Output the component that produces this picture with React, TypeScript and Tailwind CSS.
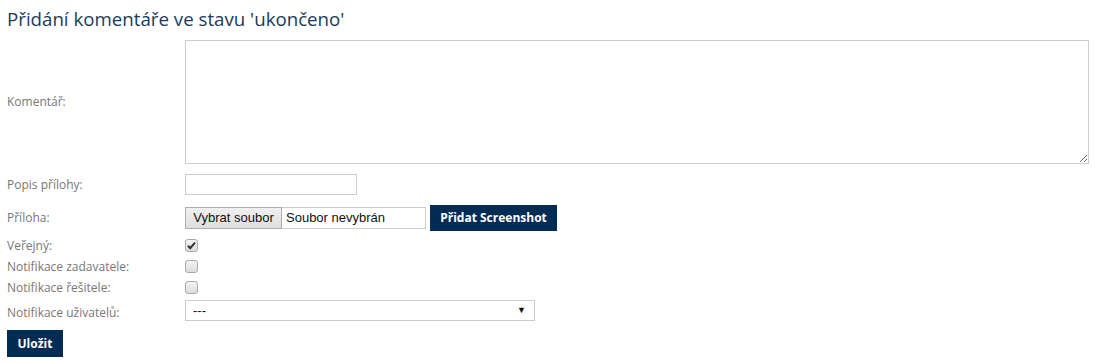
import React from "react";

const labelCls = "w-[178px] shrink-0 text-[12px] text-[#777777]";

function Check({ checked }: { checked?: boolean }) {
  return (
    <span className="relative inline-block h-[13px] w-[13px] rounded-[3px] border border-[#a9a9a9] bg-gradient-to-b from-[#f4f4f4] to-[#dcdcdc]">
      {checked && (
        <svg viewBox="0 0 13 13" className="absolute left-[-1px] top-[-1px] h-[13px] w-[13px]">
          <path d="M3 6.8 L5.2 9.2 L10 3.6" fill="none" stroke="#333" strokeWidth="2" />
        </svg>
      )}
    </span>
  );
}

export default function App() {
  return (
    <div className="h-[363px] w-[1095px] bg-white pl-[7px]" style={{ fontFamily: '"Open Sans", "Noto Sans", sans-serif' }}>
      <div className="flex h-[40px] items-start pt-[6px]">
        <h1 className="text-[18.7px] font-normal leading-[26px] text-[#1c3a5c]">Přidání komentáře ve stavu 'ukončeno'</h1>
      </div>
      <div className="flex h-[124px] items-center">
        <div className={labelCls}>Komentář:</div>
        <textarea className="h-[124px] w-[904px] resize border border-[#cccccc] outline-none" />
      </div>
      <div className="flex h-[41px] items-center">
        <div className={labelCls}>Popis přílohy:</div>
        <div className="h-[21px] w-[172px] border border-[#cccccc]" />
      </div>
      <div className="flex h-[26px] items-center">
        <div className={labelCls}>Příloha:</div>
        <div className="flex h-[22px] w-[241px] items-center border border-[#cccccc]" style={{ fontFamily: '"Liberation Sans", Arial, sans-serif' }}>
          <div className="ml-[-1px] flex h-[22px] w-[97px] items-center justify-center border border-[#adadad] bg-gradient-to-b from-[#f0f0f0] to-[#dedede] text-[13px] text-[#111]">
            Vybrat soubor
          </div>
          <span className="pl-[4px] text-[13px] text-[#111]">Soubor nevybrán</span>
        </div>
        <div className="ml-[4px] flex h-[26px] w-[127px] items-center justify-center bg-[#032c55] text-[12px] font-bold text-white">
          Přidat Screenshot
        </div>
      </div>
      <div className="mt-[4px] flex h-[21px] items-center">
        <div className={labelCls}>Veřejný:</div>
        <Check checked />
      </div>
      <div className="flex h-[21px] items-center">
        <div className={labelCls}>Notifikace zadavatele:</div>
        <Check />
      </div>
      <div className="flex h-[21px] items-center">
        <div className={labelCls}>Notifikace řešitele:</div>
        <Check />
      </div>
      <div className="flex h-[25px] items-center">
        <div className={`${labelCls} pt-[4px]`}>Notifikace uživatelů:</div>
        <div className="flex h-[21px] w-[350px] items-center justify-between border border-[#cccccc] pl-[7px] pr-[8px] text-[13px] text-[#111]" style={{ fontFamily: '"Liberation Sans", Arial, sans-serif' }}>
          <span>---</span>
          <span className="text-[9px]">▼</span>
        </div>
      </div>
      <div className="mt-[7px] flex h-[27px] w-[56px] items-center justify-center bg-[#032c55] text-[12px] font-bold text-white">
        Uložit
      </div>
    </div>
  );
}
